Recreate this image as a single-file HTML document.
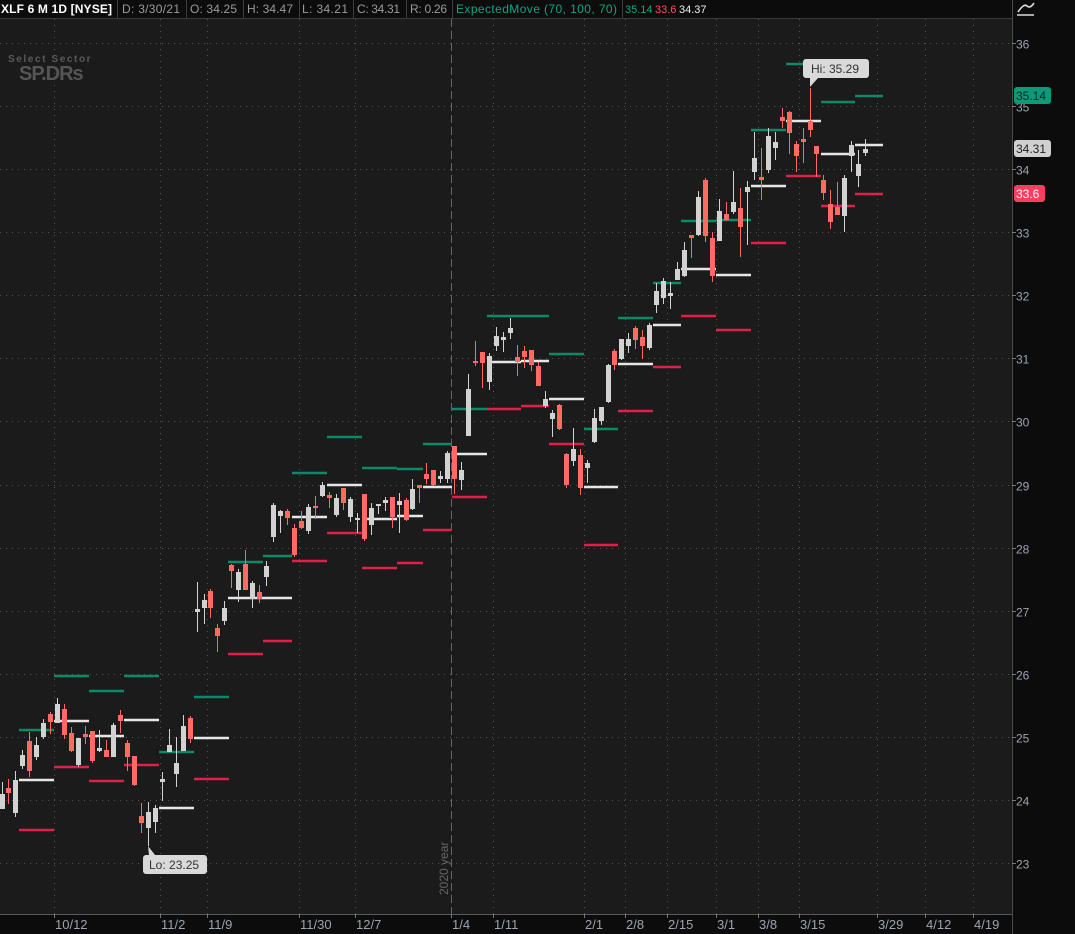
<!DOCTYPE html>
<html><head><meta charset="utf-8"><style>
html,body{margin:0;padding:0;background:#1b1b1b;width:1075px;height:934px;overflow:hidden;font-family:"Liberation Sans",sans-serif}
svg{display:block}
</style></head><body>
<svg id="s" width="1075" height="934" xmlns="http://www.w3.org/2000/svg" font-family="Liberation Sans, sans-serif">
<rect x="0" y="0" width="1075" height="934" fill="#1b1b1b"/>
<rect x="1012" y="0" width="63" height="934" fill="#0c0c0c"/>
<rect x="0" y="914" width="1075" height="20" fill="#0c0c0c"/>
<rect x="0" y="0" width="1012" height="18" fill="#0c0c0c"/>
<line x1="0" y1="18.5" x2="1012" y2="18.5" stroke="#3a3a3a"/>
<line x1="1012.5" y1="0" x2="1012.5" y2="934" stroke="#4a4a4a"/>
<line x1="0" y1="914.5" x2="1012" y2="914.5" stroke="#5a5a5a"/>
<g id="grid"></g>
<g id="em"></g>
<g id="c"></g>
<g font-size="12" fill="#e8e8e8">
<text x="1" y="13" font-weight="bold" fill="#fff" textLength="111">XLF 6 M 1D [NYSE]</text>
<text x="122" y="13" fill="#9a9a9a" textLength="58">D: 3/30/21</text>
<text x="190" y="13" fill="#9a9a9a" textLength="47">O: 34.25</text>
<text x="247" y="13" fill="#9a9a9a" textLength="46">H: 34.47</text>
<text x="302" y="13" fill="#9a9a9a" textLength="46">L: 34.21</text>
<text x="357" y="13" fill="#9a9a9a" textLength="43">C: 34.31</text>
<text x="410" y="13" fill="#9a9a9a" textLength="37">R: 0.26</text>
<text x="456" y="13" fill="#14a37f" textLength="161">ExpectedMove (70, 100, 70)</text>
<text x="625" y="13" fill="#14a37f" font-size="11">35.14</text>
<text x="655" y="13" fill="#ff4d6a" font-size="11">33.6</text>
<text x="679" y="13" fill="#eee" font-size="11">34.37</text>
</g>
<g stroke="#3e3e3e"><line x1="117.5" y1="0" x2="117.5" y2="18"/><line x1="186.5" y1="0" x2="186.5" y2="18"/><line x1="243.5" y1="0" x2="243.5" y2="18"/><line x1="299.5" y1="0" x2="299.5" y2="18"/><line x1="353.5" y1="0" x2="353.5" y2="18"/><line x1="406.5" y1="0" x2="406.5" y2="18"/><line x1="452.5" y1="0" x2="452.5" y2="18"/><line x1="622.5" y1="0" x2="622.5" y2="18"/></g>
<g fill="none" stroke="#ddd" stroke-width="1.6"><path d="M1018 12 Q1024 3 1027 6 Q1030 9 1034 3"/><line x1="1017" y1="15" x2="1034" y2="15"/></g>
<text x="8" y="62" font-size="10" font-weight="bold" fill="#5a5a5a" letter-spacing="1.6">Select Sector</text>
<text x="19" y="80" font-size="20" font-weight="bold" fill="#555" letter-spacing="-1">SP.DRs</text>
<text transform="translate(448,895) rotate(-90)" font-size="12" fill="#666">2020 year</text>
<g id="ax" font-size="12" fill="#9aa4b0"></g>
<g font-size="12">
<rect x="1014" y="87" width="37" height="17" rx="3" fill="#0d9a78"/><text x="1016" y="100" fill="#0a2a22">35.14</text>
<rect x="1014" y="140" width="37" height="17" rx="3" fill="#d0d0d0"/><text x="1016" y="153" fill="#222">34.31</text>
<rect x="1014" y="185" width="31" height="17" rx="3" fill="#ff3d5f"/><text x="1016" y="198" fill="#fff">33.6</text>
</g>
<g font-size="12" fill="#333">
<path d="M806 59 h60 a3 3 0 0 1 3 3 v13 a3 3 0 0 1 -3 3 h-48 l-8 9 l0 -9 h-4 a3 3 0 0 1 -3 -3 v-13 a3 3 0 0 1 3 -3z" fill="#d9d9d9"/>
<text x="811" y="73">Hi: 35.29</text>
<path d="M146 855 h3 l-1 -9 l7 9 h49 a3 3 0 0 1 3 3 v13 a3 3 0 0 1 -3 3 h-58 a3 3 0 0 1 -3 -3 v-13 a3 3 0 0 1 3 -3z" fill="#d9d9d9"/>
<text x="149" y="869">Lo: 23.25</text>
</g>
</svg>
<script>
var NS="http://www.w3.org/2000/svg";
function el(p,t,a){var e=document.createElementNS(NS,t);for(var k in a)e.setAttribute(k,a[k]);p.appendChild(e);return e;}
var g=document.getElementById("grid"),ax=document.getElementById("ax");
function Y(p){return 43+(36-p)*63.08;}
for(var p=23;p<=36;p++){var y=Math.round(Y(p))+0.5;
el(g,"line",{x1:0,y1:y,x2:1012,y2:y,stroke:"#555","stroke-dasharray":"1 5"});
el(g,"line",{x1:1012,y1:y,x2:1016,y2:y,stroke:"#777"});
var t=el(ax,"text",{x:1016,y:y+5});t.textContent=p;}
var ticks=[[54,"10/12"],[160,"11/2"],[207,"11/9"],[299,"11/30"],[355,"12/7"],[451,"1/4"],[493,"1/11"],[584,"2/1"],[625,"2/8"],[667,"2/15"],[716,"3/1"],[758,"3/8"],[799,"3/15"],[877,"3/29"],[925,"4/12"],[973,"4/19"]];
ticks.forEach(function(k){var x=k[0]+0.5;
if(k[0]==451)el(g,"line",{x1:x,y1:19,x2:x,y2:914,stroke:"#666","stroke-dasharray":"8 4"});
else el(g,"line",{x1:x,y1:19,x2:x,y2:914,stroke:"#555","stroke-dasharray":"1 5"});
el(g,"line",{x1:x,y1:914,x2:x,y2:918,stroke:"#777"});
var t=el(ax,"text",{x:k[0]+1,y:929,"font-size":13});t.textContent=k[1];});
var em=document.getElementById("em");
var W=[[19,54,730,780,830],[54,89,676,721,767],[89,124,691,736,781],[124,159,676,720,765],[159,194,752,808,null],[194,229,697,738,779],[228,263,562,598,654],[263,292,556,598,641],[292,327,473,517,561],[327,362,437,485,533],[362,397,468,519,568],[397,423,469,516,563],[423,452,444,487,530],[452,487,409,454,497],[487,521,316,362,409],[521,549,316,361,406],[549,584,354,399,444],[584,618,429,487,545],[618,653,318,364,411],[653,681,283,325,367],[681,716,221,269,316],[716,751,220,275,330],[751,786,130,186,243],[786,821,64,121,176],[821,855,102,154,206],[855,883,96,145,194]];
W.forEach(function(w){
el(em,"line",{x1:w[0],y1:w[2],x2:w[1],y2:w[2],stroke:"#0b8a68","stroke-width":2.5});
el(em,"line",{x1:w[0],y1:w[3],x2:w[1],y2:w[3],stroke:"#e6e6e6","stroke-width":2.5});
if(w[4])el(em,"line",{x1:w[0],y1:w[4],x2:w[1],y2:w[4],stroke:"#e01f4a","stroke-width":2.5});});
var C=[[2,794,809,782,809,0],[8,788,793,779,804,1],[15,780,813,771,817,0],[22,755,766,750,769,0],[29,741,771,732,777,1],[36,745,757,737,760,0],[43,723,737,719,739,0],[50,714,722,712,734,1],[57,704,723,698,723,0],[64,709,735,704,739,1],[71,733,751,727,752,1],[78,738,765,738,767,0],[85,734,737,726,744,1],[92,731,761,731,763,1],[99,748,751,730,752,0],[106,750,757,740,757,1],[113,725,757,723,757,0],[120,715,721,710,733,1],[127,743,757,740,771,1],[134,756,785,756,786,1],[141,816,823,803,833,1],[148,812,828,802,846,0],[155,808,822,805,833,0],[162,779,782,772,801,0],[169,745,752,729,752,0],[176,763,774,737,787,0],[183,726,751,715,751,0],[190,718,739,716,743,1],
[197,609,612,582,632,0],[204,600,608,594,624,0],[210,591,608,589,618,1],[217,628,636,624,652,1],[224,608,621,601,625,0],[231,565,571,564,588,1],[238,572,590,569,602,0],[245,564,590,550,590,1],[252,583,599,581,608,0],[259,592,599,585,603,1],[266,566,577,561,586,0],[273,505,537,503,542,0],[280,511,516,510,533,0],[287,511,518,509,525,1],[294,528,555,524,557,1],[301,521,528,511,529,1],[308,507,531,504,534,0],[315,506,508,496,519,1],[322,485,496,482,497,0],[329,495,498,492,508,1],[336,498,515,494,517,0],[343,488,503,488,510,1],[350,499,517,497,522,0],[357,518,520,513,533,0],[364,494,539,494,541,1],[371,508,525,503,535,0],[378,504,506,504,514,0],[385,500,503,497,511,0],[392,497,517,497,528,1],[399,501,505,493,533,0],[406,500,520,498,521,1],[412,489,509,479,510,0],[419,485,488,485,503,1],[426,474,479,463,484,1],[433,470,485,470,486,1],[440,476,479,471,483,0],[447,453,479,451,483,0],[454,446,479,446,494,1],[461,470,480,462,490,0],
[468,389,436,374,436,0],[475,361,362,341,366,1],[482,352,363,352,388,1],[489,356,382,353,390,0],[496,336,346,327,351,0],[503,337,340,332,352,0],[510,328,333,318,339,0],[517,357,362,345,376,1],[524,351,357,346,368,1],[531,350,365,350,371,1],[538,366,386,362,386,1],[545,399,406,391,408,0],[552,413,419,410,437,0],[559,405,429,404,430,1],[566,454,485,453,488,1],[573,449,461,428,466,0],[580,455,488,449,495,1],[587,463,468,460,483,0],[594,418,442,409,443,0],[601,407,421,407,425,0],[608,365,402,364,403,0],[614,351,365,349,370,1],[621,339,359,339,360,0],[628,339,346,333,353,0],[635,328,340,326,349,1],[642,337,346,330,359,1],[649,325,348,323,350,0],
[656,291,305,283,313,0],[663,281,298,278,304,0],[670,293,296,282,309,0],[677,269,280,262,280,0],[684,250,276,242,277,0],[691,235,238,235,258,1],[698,197,235,191,236,0],[705,180,236,178,242,1],[712,238,276,232,282,1],[719,211,241,199,241,0],[726,214,220,202,221,1],[733,202,212,171,214,0],[740,208,227,188,257,1],[747,187,192,181,245,0],[754,158,172,132,180,0],[761,177,180,148,200,1],[768,136,170,128,173,0],[775,142,148,132,160,0],[782,117,121,108,128,1],[789,112,133,111,154,1],[796,144,156,141,172,1],[803,139,142,128,163,1],[810,121,130,88,137,1],[816,146,154,146,177,1],[823,180,193,175,200,1],[830,204,222,190,229,1],[837,207,215,182,215,1],[844,178,216,175,232,0],[851,145,156,141,172,0],[858,164,176,150,187,0],[865,149,153,139,156,0]];
var cg=document.getElementById("c");
C.forEach(function(c){var col=c[5]?"#ff6b63":"#d2d2d2";
el(cg,"line",{x1:c[0]+0.5,y1:c[3],x2:c[0]+0.5,y2:c[4],stroke:col,"stroke-width":1});
el(cg,"rect",{x:c[0]-2,y:c[1],width:5,height:Math.max(2,c[2]-c[1]),fill:col});});
</script>
</body></html>
